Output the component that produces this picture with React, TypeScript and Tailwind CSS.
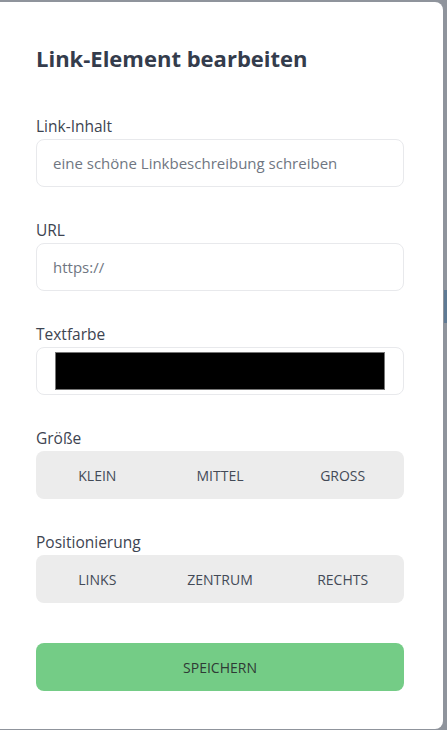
import React from "react";

const sizes = ["KLEIN", "MITTEL", "GROSS"];
const positions = ["LINKS", "ZENTRUM", "RECHTS"];

const Segmented: React.FC<{ items: string[] }> = ({ items }) => (
  <div className="grid grid-cols-3 h-12 rounded-lg bg-[#ececec]">
    {items.map((item) => (
      <button
        key={item}
        type="button"
        className="flex items-center justify-center text-[14px] text-[#434a57]"
      >
        {item}
      </button>
    ))}
  </div>
);

const Field: React.FC<{ label: string; children: React.ReactNode }> = ({ label, children }) => (
  <div className="flex flex-col">
    <label className="h-[25px] leading-6 text-[15.5px] text-[#3d4451]">{label}</label>
    {children}
  </div>
);

const App: React.FC = () => {
  return (
    <div
      className="relative w-[447px] h-[730px] overflow-hidden bg-[#8f949c]"
      style={{ fontFamily: "'Open Sans', 'Noto Sans', sans-serif" }}
    >
      {/* page behind the overlay */}
      <div className="absolute right-0 top-[290px] w-[3px] h-[33px] bg-[#5f7a94]"></div>

      {/* Modal */}
      <div className="absolute left-0 top-[2px] w-[443px] h-[727px] bg-white rounded-r-lg pl-9 pr-[39px] pt-[42px]">
        <h2 className="text-[22px] leading-7 font-bold text-[#343c4c]">Link-Element bearbeiten</h2>

        <div className="mt-[42px] flex flex-col gap-[31px]">
          <Field label="Link-Inhalt">
            <input
              className="h-12 rounded-lg border border-[#e8e9ec] px-4 text-[15px] text-[#374151] placeholder:text-[#6f7682] outline-none"
              placeholder="eine schöne Linkbeschreibung schreiben"
            />
          </Field>

          <Field label="URL">
            <input
              className="h-12 rounded-lg border border-[#e8e9ec] px-4 text-[15px] text-[#374151] placeholder:text-[#6f7682] outline-none"
              placeholder="https://"
            />
          </Field>

          <Field label="Textfarbe">
            <div className="h-12 rounded-lg border border-[#e8e9ec] flex items-center pl-[18px] pr-[18px]">
              <div className="h-[38px] w-full bg-black border border-[#767676]"></div>
            </div>
          </Field>

          <Field label="Größe">
            <Segmented items={sizes} />
          </Field>

          <Field label="Positionierung">
            <Segmented items={positions} />
          </Field>
        </div>

        <button
          type="button"
          className="mt-10 w-full h-12 rounded-lg bg-[#74cc86] text-[14px] text-[#2f3a35]"
        >
          SPEICHERN
        </button>
      </div>
    </div>
  );
};

export default App;
